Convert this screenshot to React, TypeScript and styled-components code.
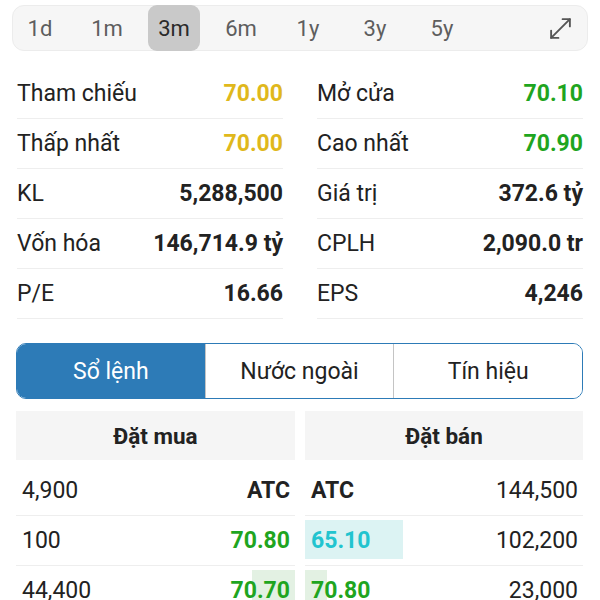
import React from "react";
import styled, { createGlobalStyle } from "styled-components";

const GlobalStyle = createGlobalStyle`
    html, body {
        margin: 0;
        padding: 0;
        background: #ffffff;
        font-family: Roboto, "Noto Sans", sans-serif;
    }
`;

const colors = {
    text: "#222222",
    line: "#eeeeee",
    yellow: "#e0b81c",
    green: "#1fa51f",
    cyan: "#22c4cf",
    blue: "#2d7bb7",
};

const Page = styled.div`
    width: 600px;
    height: 600px;
    overflow: hidden;
    padding-top: 5px;
    box-sizing: border-box;
`;

const RangeBar = styled.div`
    margin: 0 12px;
    height: 46px;
    display: flex;
    align-items: center;
    background: #f6f6f6;
    border: 1px solid #ececec;
    border-radius: 12px;
    box-sizing: border-box;
    padding-left: 1px;
    padding-right: 14px;
`;

const RangeItem = styled.div<{ $active?: boolean }>`
    width: 52px;
    height: 46px;
    margin-right: 15px;
    display: flex;
    align-items: center;
    justify-content: center;
    border-radius: 9px;
    font-size: 22px;
    color: ${(p) => (p.$active ? "#2a2a2a" : "#5e5e5e")};
    background: ${(p) => (p.$active ? "#c9c9c9" : "transparent")};
`;

const ExpandBtn = styled.div`
    margin-left: auto;
    display: flex;
    color: #555555;
`;

const StatsGrid = styled.div`
    display: grid;
    grid-template-columns: 1fr 1fr;
    column-gap: 34px;
    padding: 18px 17px 0;
`;

const StatRow = styled.div`
    height: 50px;
    display: flex;
    align-items: center;
    justify-content: space-between;
    border-bottom: 1px solid ${colors.line};
    box-sizing: border-box;
    font-size: 23px;
    color: ${colors.text};
`;

const StatValue = styled.span<{ $color?: string }>`
    font-weight: 700;
    color: ${(p) => p.$color || colors.text};
`;

const Segmented = styled.div`
    margin: 24px 17px 0 16px;
    height: 56px;
    display: flex;
    border: 1.5px solid ${colors.blue};
    border-radius: 10px;
    overflow: hidden;
    box-sizing: border-box;
`;

const Segment = styled.div<{ $active?: boolean }>`
    flex: 1;
    display: flex;
    align-items: center;
    justify-content: center;
    font-size: 23px;
    color: ${(p) => (p.$active ? "#ffffff" : colors.text)};
    background: ${(p) => (p.$active ? colors.blue : "#ffffff")};
    & + & {
        border-left: 1px solid #c4c4c4;
    }
`;

const BookGrid = styled.div`
    display: grid;
    grid-template-columns: 279px 278px;
    column-gap: 10px;
    padding: 12px 17px 0 16px;
`;

const BookHeader = styled.div`
    height: 49px;
    display: flex;
    align-items: center;
    justify-content: center;
    background: #f5f5f5;
    font-size: 22.5px;
    font-weight: 700;
    color: ${colors.text};
    margin-bottom: 6px;
`;

const BookRow = styled.div`
    height: 50px;
    display: flex;
    align-items: center;
    justify-content: space-between;
    border-bottom: 1px solid ${colors.line};
    box-sizing: border-box;
    font-size: 23px;
    color: ${colors.text};
`;

const Volume = styled.span<{ $side: "buy" | "sell" }>`
    padding: ${(p) => (p.$side === "buy" ? "0 0 0 6px" : "0 5px 0 0")};
`;

const Price = styled.span<{ $color?: string; $side: "buy" | "sell" }>`
    position: relative;
    font-weight: 700;
    color: ${(p) => p.$color || colors.text};
    padding: ${(p) => (p.$side === "buy" ? "0 5px 0 0" : "0 0 0 6px")};
    z-index: 0;
`;

const Bar = styled.span<{ $bg: string; $side: "buy" | "sell" }>`
    position: absolute;
    top: -7px;
    height: 39px;
    ${(p) => (p.$side === "buy" ? "right: 0;" : "left: 0;")}
    background: ${(p) => p.$bg};
    z-index: -1;
`;

const stats = [
    ["Tham chiếu", "70.00", colors.yellow, "Mở cửa", "70.10", colors.green],
    ["Thấp nhất", "70.00", colors.yellow, "Cao nhất", "70.90", colors.green],
    ["KL", "5,288,500", "", "Giá trị", "372.6 tỷ", ""],
    ["Vốn hóa", "146,714.9 tỷ", "", "CPLH", "2,090.0 tr", ""],
    ["P/E", "16.66", "", "EPS", "4,246", ""],
];

type Order = { vol: string; price: string; color: string; bar?: number; barBg?: string };

const buys: Order[] = [
    { vol: "4,900", price: "ATC", color: "" },
    { vol: "100", price: "70.80", color: colors.green },
    { vol: "44,400", price: "70.70", color: colors.green, bar: 43, barBg: "#e3f1e3" },
];

const sells: Order[] = [
    { vol: "144,500", price: "ATC", color: "" },
    { vol: "102,200", price: "65.10", color: colors.cyan, bar: 98, barBg: "#dcf3f3" },
    { vol: "23,000", price: "70.80", color: colors.green, bar: 22, barBg: "#e3f1e3" },
];

function ExpandIcon() {
    return (
        <svg width="25" height="25" viewBox="0 0 24 24" fill="none" stroke="currentColor" strokeWidth="1.8" strokeLinecap="round" strokeLinejoin="round">
            <polyline points="14 3 21 3 21 10" />
            <polyline points="10 21 3 21 3 14" />
            <line x1="21" y1="3" x2="3" y2="21" />
        </svg>
    );
}

export default function App() {
    const ranges = ["1d", "1m", "3m", "6m", "1y", "3y", "5y"];
    return (
        <Page>
            <GlobalStyle />
            <RangeBar>
                {ranges.map((r) => (
                    <RangeItem key={r} $active={r === "3m"}>
                        {r}
                    </RangeItem>
                ))}
                <ExpandBtn>
                    <ExpandIcon />
                </ExpandBtn>
            </RangeBar>

            <StatsGrid>
                {stats.map(([l1, v1, c1, l2, v2, c2]) => (
                    <React.Fragment key={l1}>
                        <StatRow>
                            <span>{l1}</span>
                            <StatValue $color={c1}>{v1}</StatValue>
                        </StatRow>
                        <StatRow>
                            <span>{l2}</span>
                            <StatValue $color={c2}>{v2}</StatValue>
                        </StatRow>
                    </React.Fragment>
                ))}
            </StatsGrid>

            <Segmented>
                <Segment $active>Sổ lệnh</Segment>
                <Segment>Nước ngoài</Segment>
                <Segment>Tín hiệu</Segment>
            </Segmented>

            <BookGrid>
                <BookHeader>Đặt mua</BookHeader>
                <BookHeader>Đặt bán</BookHeader>
                {buys.map((b, i) => {
                    const s = sells[i];
                    return (
                        <React.Fragment key={i}>
                            <BookRow>
                                <Volume $side="buy">{b.vol}</Volume>
                                <Price $side="buy" $color={b.color}>
                                    {b.bar && <Bar $side="buy" $bg={b.barBg!} style={{ width: b.bar }} />}
                                    {b.price}
                                </Price>
                            </BookRow>
                            <BookRow>
                                <Price $side="sell" $color={s.color}>
                                    {s.bar && <Bar $side="sell" $bg={s.barBg!} style={{ width: s.bar }} />}
                                    {s.price}
                                </Price>
                                <Volume $side="sell">{s.vol}</Volume>
                            </BookRow>
                        </React.Fragment>
                    );
                })}
            </BookGrid>
        </Page>
    );
}
